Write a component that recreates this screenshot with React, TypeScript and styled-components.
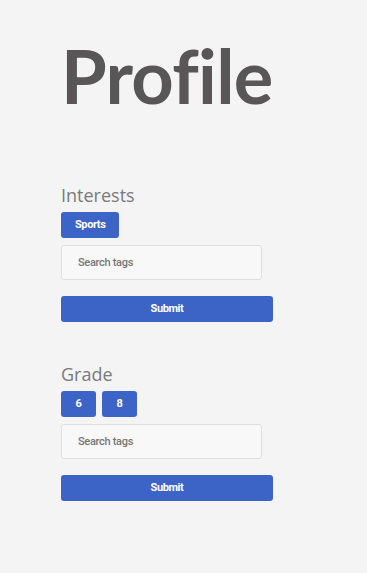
import React from "react";
import styled, { createGlobalStyle } from "styled-components";

const GlobalStyle = createGlobalStyle`
  html, body {
    margin: 0;
    padding: 0;
    background: #f4f4f4;
  }
  * { box-sizing: border-box; }
`;

const Page = styled.div`
  display: flex;
  flex-direction: column;
  padding: 32px 0 40px 61px;
  min-height: 573px;
  background: #f4f4f4;
`;

const Title = styled.h1`
  margin: 0 0 62px 0;
  font-family: Lato, "Noto Sans", sans-serif;
  font-weight: 700;
  font-size: 74px;
  line-height: 1.2;
  color: #585656;
  letter-spacing: -0.7px;
`;

const Section = styled.section`
  display: flex;
  flex-direction: column;
  align-items: flex-start;
  & + & {
    margin-top: 40px;
  }
`;

const Heading = styled.h2`
  margin: 0 0 5px 0;
  font-family: "Open Sans", "Noto Sans", sans-serif;
  font-weight: 400;
  font-size: 18px;
  line-height: 24px;
  color: #7a7a7a;
`;

const TagRow = styled.div`
  display: flex;
  gap: 6px;
  margin-bottom: 7px;
`;

const Tag = styled.button`
  height: 26px;
  min-width: 35px;
  padding: 0 14px;
  border: none;
  border-radius: 3px;
  background: #3c64c6;
  color: #ffffff;
  font-family: Roboto, "Liberation Sans", sans-serif;
  font-weight: 700;
  font-size: 11px;
  letter-spacing: -0.4px;
  cursor: pointer;
`;

const SearchInput = styled.input`
  width: 201px;
  height: 35px;
  padding: 0 0 0 16px;
  border: 1px solid #dedede;
  border-radius: 3px;
  background: #f8f8f8;
  font-family: Roboto, "Liberation Sans", sans-serif;
  font-weight: 500;
  font-size: 11px;
  letter-spacing: -0.3px;
  color: #555;
  outline: none;
  margin-bottom: 16px;
  &::placeholder {
    color: #767676;
  }
`;

const SubmitButton = styled.button`
  width: 212px;
  height: 26px;
  border: none;
  border-radius: 3px;
  background: #3c64c6;
  color: #ffffff;
  font-family: Roboto, "Liberation Sans", sans-serif;
  font-weight: 700;
  font-size: 11px;
  letter-spacing: -0.4px;
  cursor: pointer;
`;

const sections = [
  { title: "Interests", tags: ["Sports"] },
  { title: "Grade", tags: ["6", "8"] },
];

export default function App() {
  return (
    <>
      <GlobalStyle />
      <Page>
        <Title>Profile</Title>
        {sections.map((s) => (
          <Section key={s.title}>
            <Heading>{s.title}</Heading>
            <TagRow>
              {s.tags.map((t) => (
                <Tag key={t}>{t}</Tag>
              ))}
            </TagRow>
            <SearchInput placeholder="Search tags" />
            <SubmitButton>Submit</SubmitButton>
          </Section>
        ))}
      </Page>
    </>
  );
}
